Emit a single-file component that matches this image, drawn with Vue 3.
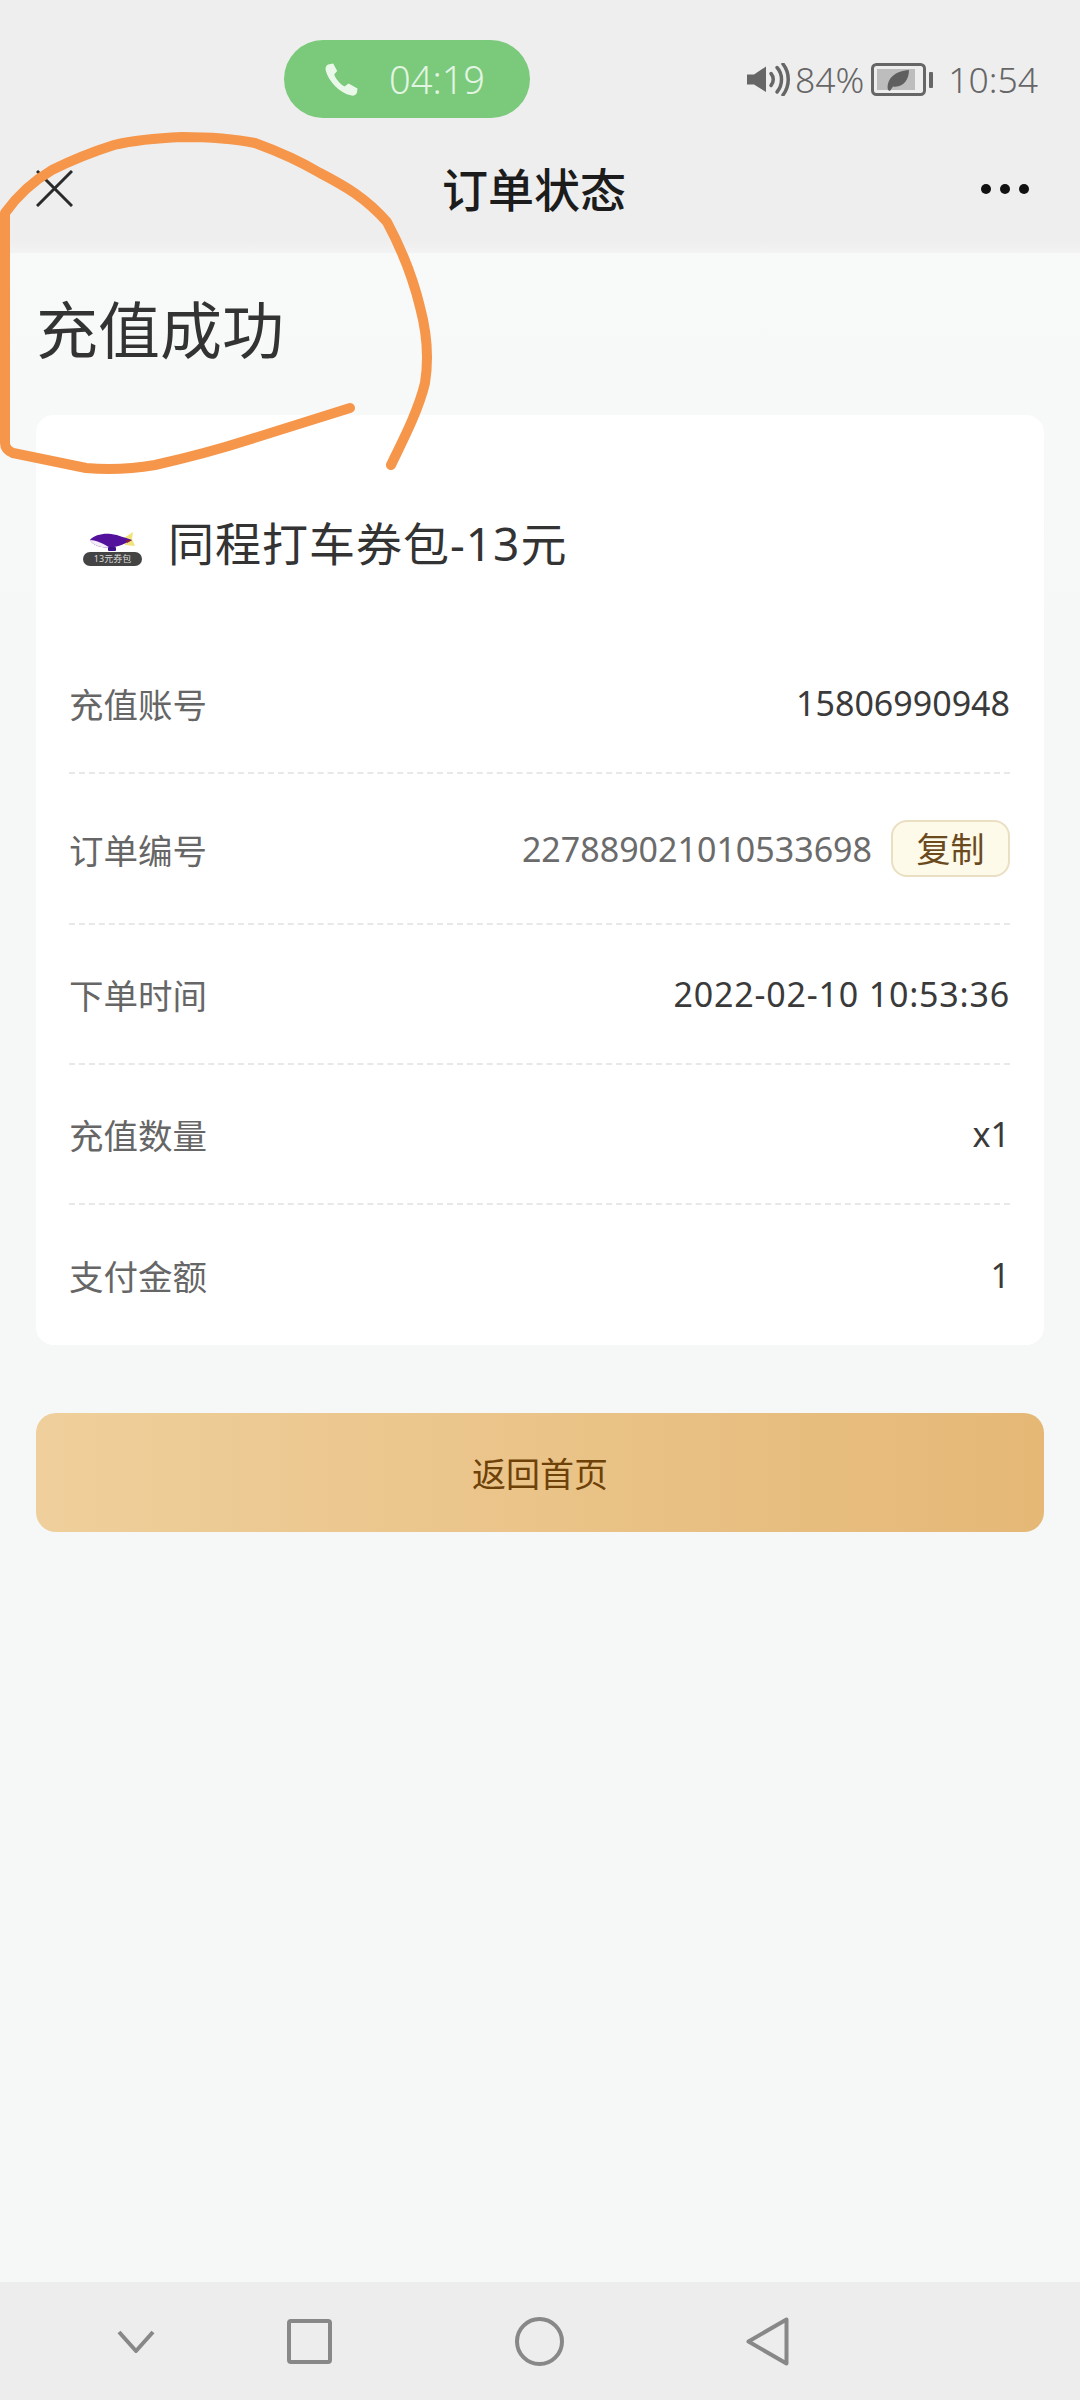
<template>
  <div class="page">
    <header class="top">
      <div class="status-bar">
        <div class="call-pill">
          <svg class="phone" viewBox="0 0 33 33">
            <path d="M3 1.500 8.200 0.500 12.200 8 9.200 11.500C10.500 15.500 15 21 19.500 23.500L23.600 20.600 32.500 25.500 32 29.500C31.500 31.800 29 33 26.500 32.600 14 30 3.500 18 0.700 7.500 0.200 4.800 1 2.500 3 1.500Z" />
          </svg>
          <span>04:19</span>
        </div>
        <div class="status-right">
          <svg class="speaker" viewBox="0 0 44 33">
            <path class="speaker-body" d="M0 11.500H7L19 3.500V29L7 21.500H0Z" />
            <path class="speaker-wave" d="M24 10.500C27 14 27 19 24 22.500" />
            <path class="speaker-wave" d="M30 4.500C36 11 36 22 30 29" />
            <path class="speaker-wave" d="M36 1C43 10 43 23 36 32" />
          </svg>
          <span class="percent">84%</span>
          <svg class="battery" viewBox="0 0 63 33">
            <rect x="1.500" y="1.500" width="52" height="30" rx="4" class="battery-shell" />
            <rect x="6" y="6" width="38" height="21" fill="#bdbdbd" />
            <path d="M17 27C15 16 24 8 38 7 38 17 32 25 22 23.500L19 28Z" fill="#5f5f5f" />
            <rect x="58" y="9" width="4" height="16" rx="1" fill="#666" />
          </svg>
          <span class="clock">10:54</span>
        </div>
      </div>
      <nav class="nav-bar">
        <svg class="close" viewBox="0 0 37 37">
          <path d="M1 1 36 36M36 1 1 36" />
        </svg>
        <h1>订单状态</h1>
        <div class="more">
          <i v-for="n in 3" :key="n"></i>
        </div>
      </nav>
    </header>

    <main class="content">
      <h2 class="result">充值成功</h2>

      <section class="card">
        <div class="product">
          <div class="logo">
            <svg viewBox="0 0 59 20">
              <path d="M41 6 50 0 49 7 52 14 42 13Z" fill="#f2e27a" />
              <path d="M7 8C11 3 20 1 28 2 36 3 42 6 49 8 43 11 36 15 27 15.500 17 16 10 13 7 8Z" fill="#54119b" />
              <path d="M7 8C14 8 20 12 27 15.500 17 16 10 13 7 8Z" fill="#f4ecf8" />
              <path d="M43 8 49 8 44 11Z" fill="#8a1f3a" />
              <rect x="25" y="15" width="8" height="4" rx="1" fill="#40108a" />
            </svg>
            <span class="logo-tag">13元券包</span>
          </div>
          <span class="product-name">同程打车券包-13元</span>
        </div>

        <div v-for="row in rows" :key="row.label" class="row" :class="{ tall: row.copy }">
          <span class="label">{{ row.label }}</span>
          <span class="value" :class="{ muted: row.copy, date: row.date }">{{ row.value }}</span>
          <button v-if="row.copy" class="copy">复制</button>
        </div>
      </section>

      <button class="home-btn">返回首页</button>
    </main>

    <footer class="bottom-nav">
      <svg class="nav-back" viewBox="0 0 38 23">
        <path d="M2 2 19 21 36 2" />
      </svg>
      <svg class="nav-square" viewBox="0 0 45 45">
        <rect x="2" y="2" width="41" height="41" rx="2" />
      </svg>
      <svg class="nav-circle" viewBox="0 0 49 49">
        <circle cx="24.500" cy="24.500" r="22.500" />
      </svg>
      <svg class="nav-triangle" viewBox="0 0 43 49">
        <path d="M40.500 2.500V46.500L2.500 24.500Z" />
      </svg>
    </footer>

    <!-- hand drawn mark on top of the screenshot -->
    <svg class="scribble" viewBox="0 0 1080 2400">
      <path d="M391 465C402 442 418 412 425 383 429 358 427 333 420 307 414 282 402 250 387 222 366 198 345 186 320 173 298 160 277 151 255 143 230 138 205 137 182 137 158 138 135 140 114 145 92 152 72 160 52 170 35 180 20 192 5 213V443C5 448 8 451 13 453L86 468C108 470 132 469 155 465 186 458 217 450 248 440L350 408" />
    </svg>
  </div>
</template>

<script setup>
const rows = [
  { label: '充值账号', value: '15806990948' },
  { label: '订单编号', value: '227889021010533698', copy: true },
  { label: '下单时间', value: '2022-02-10 10:53:36', date: true },
  { label: '充值数量', value: 'x1' },
  { label: '支付金额', value: '1' }
];
</script>

<style>
body {
  background: #f6f8f8;
}
</style>

<style scoped>
.page {
  position: relative;
  width: 1080px;
  height: 2400px;
  display: flex;
  flex-direction: column;
  overflow: hidden;
  background: linear-gradient(#f9fafa, #f6f8f8 700px);
  font-family: "Noto Sans", "Noto Sans CJK SC", sans-serif;
  color: #333;
}

.top {
  height: 253px;
  flex-shrink: 0;
  padding-top: 40px;
  box-sizing: border-box;
  background: linear-gradient(#eeeeef 240px, #f3f3f4);
}

.status-bar {
  display: flex;
  align-items: center;
  height: 78px;
  padding: 0 42px 0 284px;
}

.call-pill {
  display: flex;
  align-items: center;
  gap: 31px;
  width: 246px;
  height: 78px;
  box-sizing: border-box;
  padding-left: 41px;
  border-radius: 39px;
  background: #7bc97b;
  color: #e2f5e2;
  font-size: 38px;
  font-weight: 300;
}

.phone {
  width: 33px;
  height: 33px;
  fill: #e9f8e9;
}

.status-right {
  display: flex;
  align-items: center;
  margin-left: auto;
  color: #666;
  font-size: 35.500px;
  font-weight: 300;
}

.speaker {
  width: 44px;
  height: 33px;
}

.speaker-body {
  fill: #666;
}

.speaker-wave {
  fill: none;
  stroke: #666;
  stroke-width: 3.500;
  stroke-linecap: round;
}

.percent {
  margin-left: 4px;
}

.battery {
  width: 63px;
  height: 33px;
  margin-left: 7px;
}

.battery-shell {
  fill: none;
  stroke: #666;
  stroke-width: 3;
}

.clock {
  margin-left: 14px;
}

.nav-bar {
  display: flex;
  align-items: center;
  justify-content: space-between;
  height: 135px;
  padding: 6px 51px 0 36px;
  box-sizing: border-box;
}

.close {
  width: 37px;
  height: 37px;
  fill: none;
  stroke: #2a2a2a;
  stroke-width: 3;
}

.nav-bar h1 {
  margin: 0 0 0 14px;
  font-size: 46px;
  line-height: 60px;
  font-weight: 500;
  color: #1c1c1c;
}

.more {
  display: flex;
  gap: 9px;
}

.more i {
  width: 10px;
  height: 10px;
  border-radius: 50%;
  background: #111;
}

.content {
  padding: 0 36px;
}

.result {
  margin: 0;
  height: 162px;
  padding-top: 35px;
  box-sizing: border-box;
  font-size: 62px;
  line-height: 84px;
  font-weight: 400;
  color: #333;
}

.card {
  padding: 0 34px 0 33px;
  border-radius: 18px;
  background: #fff;
}

.product {
  display: flex;
  align-items: center;
  height: 219px;
  padding: 37px 0 0 14px;
  box-sizing: border-box;
}

.logo {
  display: flex;
  flex-direction: column;
  align-items: center;
  width: 59px;
  margin-top: 12px;
}

.logo svg {
  width: 59px;
  height: 20px;
  display: block;
}

.logo-tag {
  width: 59px;
  height: 14px;
  border-radius: 7px;
  background: #444;
  color: #ddd;
  font-size: 9px;
  line-height: 14px;
  text-align: center;
  white-space: nowrap;
}

.product-name {
  margin-left: 26px;
  font-size: 46px;
  line-height: 60px;
  letter-spacing: 1px;
  color: #333;
}

.row {
  display: flex;
  align-items: center;
  height: 140px;
  border-bottom: 2px dashed #e8e8e8;
  box-sizing: border-box;
  font-size: 34.500px;
}

.row.tall {
  height: 151px;
}

.row:last-child {
  border-bottom: none;
}

.label {
  color: #666;
}

.value {
  margin-left: auto;
  color: #3a3a3a;
  font-size: 34px;
}

.value.muted {
  color: #6b6b6b;
}

.value.date {
  letter-spacing: 0.800px;
}

.copy {
  width: 119px;
  height: 57px;
  margin-left: 19px;
  padding: 0;
  border: 2px solid #eadfc2;
  border-radius: 16px;
  background: #fefaea;
  color: #6b4a1e;
  font-family: inherit;
  font-size: 34px;
  line-height: 1;
}

.home-btn {
  display: block;
  width: 100%;
  height: 119px;
  margin-top: 68px;
  padding: 0;
  border: none;
  border-radius: 20px;
  background: linear-gradient(90deg, #efcf9b, #e5b876);
  color: #6e4108;
  font-family: inherit;
  font-size: 34px;
}

.bottom-nav {
  position: relative;
  margin-top: auto;
  height: 118px;
  flex-shrink: 0;
  background: #ededee;
  display: flex;
  align-items: center;
  padding: 0 0 0 117px;
  box-sizing: border-box;
}

.bottom-nav svg {
  fill: none;
  stroke: #888;
  stroke-width: 4;
  stroke-linejoin: round;
}

.nav-back {
  width: 38px;
  height: 23px;
}

.nav-square {
  width: 45px;
  height: 45px;
  margin-left: 132px;
}

.nav-circle {
  width: 49px;
  height: 49px;
  margin-left: 183px;
}

.nav-triangle {
  width: 43px;
  height: 49px;
  margin-left: 182px;
}

.scribble {
  position: absolute;
  left: 0;
  top: 0;
  width: 1080px;
  height: 2400px;
  fill: none;
  stroke: #f5964a;
  stroke-width: 10;
  stroke-linecap: round;
  stroke-linejoin: round;
  pointer-events: none;
}
</style>
